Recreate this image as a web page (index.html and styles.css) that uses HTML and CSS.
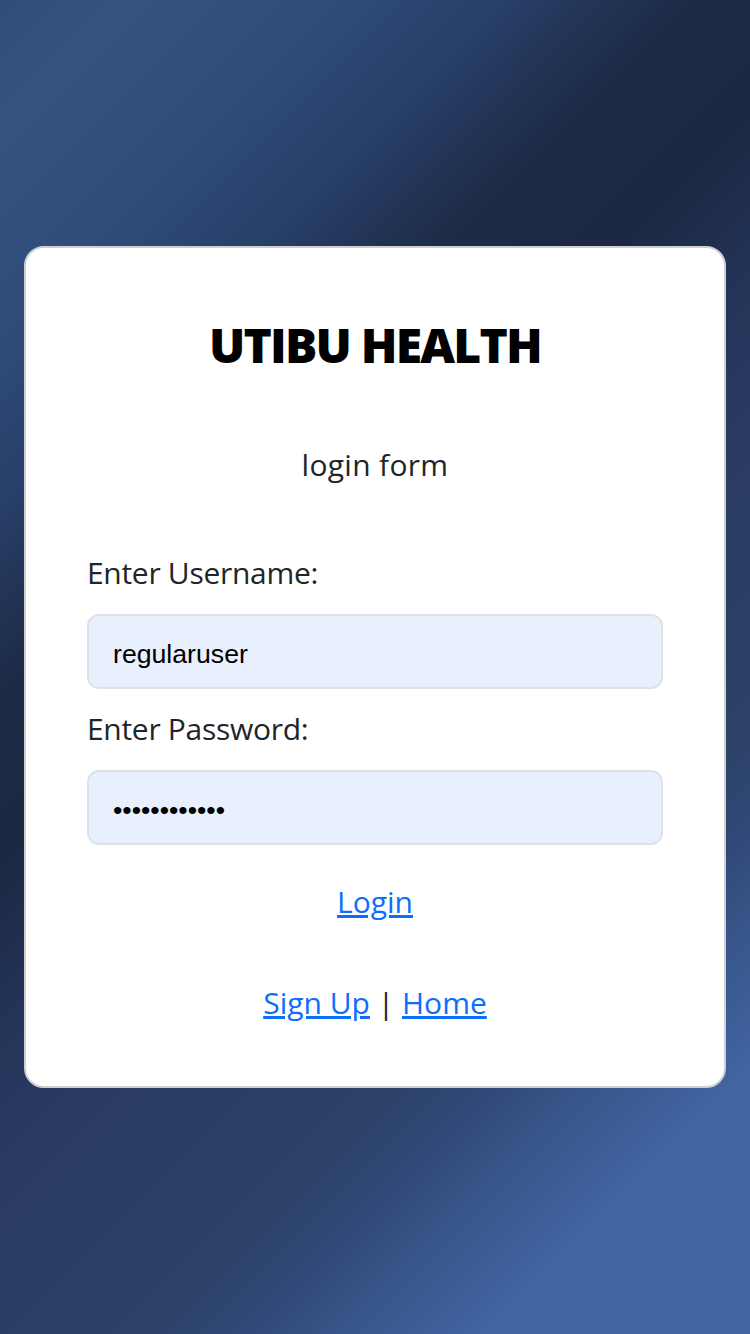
FILE: index.html
```html
<!DOCTYPE html>
<html lang="en">
<head>
<meta charset="utf-8">
<title>Utibu Health - Login</title>
<link rel="stylesheet" href="styles.css">
</head>
<body>
<div class="page">
  <main class="card">
    <h2 class="title">UTIBU HEALTH</h2>
    <p class="subtitle">login form</p>
    <form class="form">
      <label class="label" for="username">Enter Username:</label>
      <input class="field" id="username" type="text" value="regularuser">
      <label class="label" for="password">Enter Password:</label>
      <input class="field" id="password" type="password" value="regular12345">
      <div class="submit-row"><button type="submit" class="link-btn">Login</button></div>
    </form>
    <p class="footer-links"><a href="#" class="link">Sign Up</a> | <a href="#" class="link">Home</a></p>
  </main>
</div>
</body>
</html>
```

FILE: styles.css
```css
html, body {
  margin: 0;
  padding: 0;
  height: 100%;
}

body {
  font-family: "Open Sans", "Noto Sans", sans-serif;
  color: #212529;
}

.page {
  min-height: 100vh;
  box-sizing: border-box;
  display: flex;
  align-items: center;
  justify-content: center;
  padding: 0 24px;
  background: linear-gradient(135deg,
    #304d79 0%,
    #34537f 6%,
    #304d7a 15%,
    #28406a 24%,
    #1d2b46 33%,
    #1c2842 41%,
    #24355a 50%,
    #2a3c62 58%,
    #2b3f66 64%,
    #2c4268 71%,
    #31497a 76%,
    #375588 80%,
    #3e5f99 85%,
    #4467a3 88%,
    #4467a3 100%);
}

.card {
  width: 100%;
  box-sizing: border-box;
  background: #fff;
  border: 2px solid #cfcfcf;
  border-radius: 20px;
  padding: 69px 61px 63px;
  text-align: center;
}

.title {
  margin: 0;
  font-size: 48px;
  line-height: 56px;
  font-weight: 800;
  color: #000;
  letter-spacing: -1.8px;
}

.subtitle {
  margin: 72px 0 0;
  font-size: 30px;
  line-height: 40px;
  letter-spacing: 0.3px;
}

.form {
  margin-top: 68px;
  display: flex;
  flex-direction: column;
  text-align: left;
}

.label {
  font-size: 30px;
  line-height: 40px;
  letter-spacing: -0.3px;
  margin-bottom: 21px;
}

.field {
  box-sizing: border-box;
  width: 100%;
  height: 75px;
  margin: 0 0 20px;
  padding: 5px 24px 0;
  border: 2px solid #dee2e6;
  border-radius: 12px;
  background: #e8f0fe;
  font-family: "Liberation Sans", Arial, sans-serif;
  font-size: 26.67px;
  color: #000;
  outline: none;
}

.form .field:last-of-type {
  margin-bottom: 0;
}

.submit-row {
  margin-top: 37px;
  text-align: center;
}

.link-btn {
  background: none;
  border: 0;
  padding: 0;
  margin: 0;
  font-family: inherit;
  font-size: 30px;
  line-height: 40px;
  color: #0d6efd;
  text-decoration: underline;
  cursor: pointer;
}

.footer-links {
  margin: 61px 0 0;
  font-size: 30px;
  line-height: 40px;
}

.link {
  color: #0d6efd;
  text-decoration: underline;
}
```
